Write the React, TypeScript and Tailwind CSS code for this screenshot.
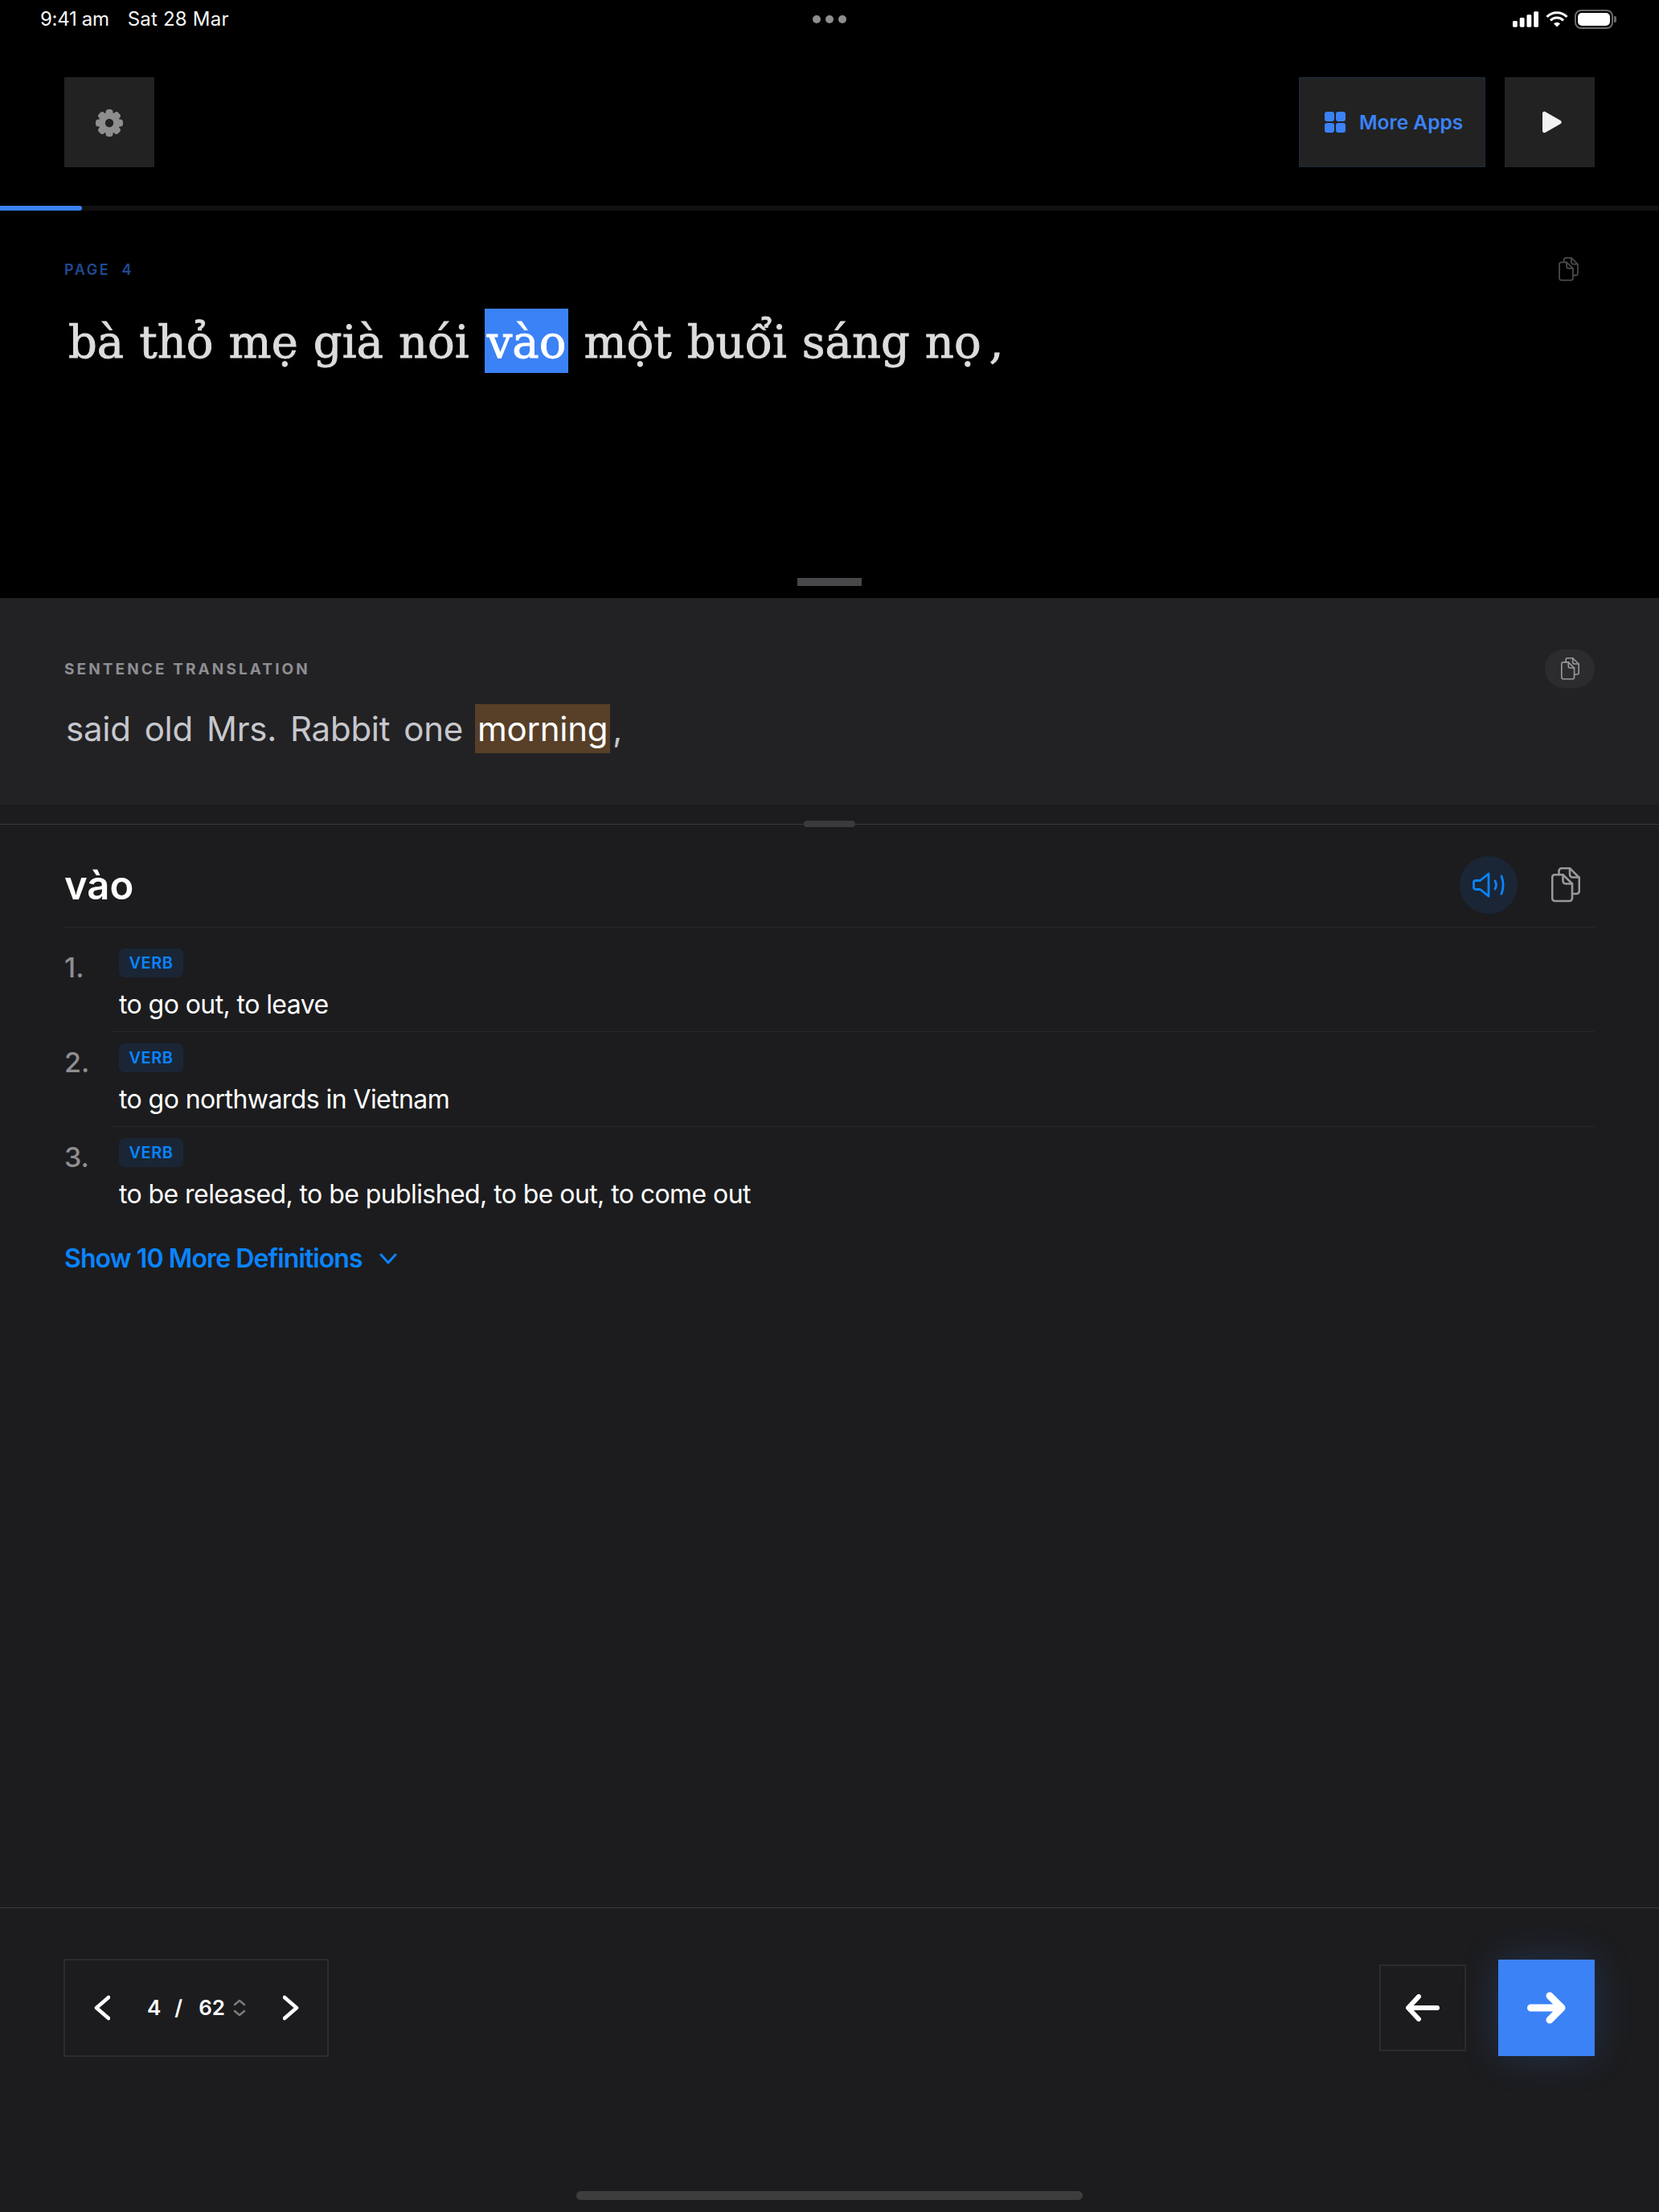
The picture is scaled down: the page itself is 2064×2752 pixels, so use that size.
import React from "react";

function CopyIcon({ className }: { className: string }) {
  return (
    <svg viewBox="0 0 36 44" fill="none" stroke="currentColor" strokeWidth="2.6" strokeLinejoin="round" strokeLinecap="round" className={className}>
      <path d="M4.5 9.2H14.5L26 20.5V38.5a3.5 3.5 0 0 1-3.5 3.5H4.7a3.5 3.5 0 0 1-3.5-3.5V12.7a3.5 3.5 0 0 1 3.3-3.5z" />
      <path d="M14.5 9.2V17a3.5 3.5 0 0 0 3.5 3.5H26" />
      <path d="M9.5 9V4.7a3.5 3.5 0 0 1 3.5-3.5H23L34.8 13V29.5a3.5 3.5 0 0 1-3.5 3.5H26" />
      <path d="M23 1.2V9a3.5 3.5 0 0 0 3.5 3.5H34.8" />
    </svg>
  );
}

function Gear() {
  return (
    <svg viewBox="0 0 34 34" fill="#8e8e8e" className="w-[34px] h-[34px] mt-[2px]">
      {[0, 45, 90, 135, 180, 225, 270, 315].map((a) => (
        <rect key={a} x="12.5" y="0" width="9" height="9" rx="3.5" transform={`rotate(${a} 17 17)`} />
      ))}
      <circle cx="17" cy="17" r="9.2" fill="none" stroke="#8e8e8e" strokeWidth="8" />
    </svg>
  );
}

function Chevron({ d, className }: { d: string; className: string }) {
  return (
    <svg viewBox="0 0 20 32" fill="none" stroke="currentColor" strokeWidth="4.6" strokeLinecap="round" strokeLinejoin="round" className={className}>
      <path d={d} />
    </svg>
  );
}

const viWords = ["bà", "thỏ", "mẹ", "già", "nói", "vào", "một", "buổi", "sáng", "nọ", ","];
const enWords = ["said", "old", "Mrs.", "Rabbit", "one", "morning", ","];
const defs = [
  "to go out, to leave",
  "to go northwards in Vietnam",
  "to be released, to be published, to be out, to come out",
];

export default function App() {
  return (
    <div className="relative w-[2064px] h-[2752px] flex flex-col bg-[#1c1c1e] text-white overflow-hidden font-['Inter',sans-serif]">
      <div className="bg-black">
        <div className="relative h-[48px] flex items-center pl-[50px] pr-[53px] text-[24px] leading-none text-[#f5f5f5]">
          <span className="tracking-[-0.3px]">9:41 am</span>
          <span className="ml-[23px] tracking-[0.2px]">Sat 28 Mar</span>
          <div className="absolute left-0 right-0 top-[19px] flex justify-center gap-[6px]">
            <span className="w-[10px] h-[10px] rounded-full bg-[#8e8e8e]" />
            <span className="w-[10px] h-[10px] rounded-full bg-[#8e8e8e]" />
            <span className="w-[10px] h-[10px] rounded-full bg-[#8e8e8e]" />
          </div>
          <svg viewBox="0 0 34 20" fill="white" className="ml-auto w-[33px] h-[20px] mr-[8px]">
            <rect x="0" y="12" width="6" height="8" rx="1.5" />
            <rect x="9" y="8" width="6" height="12" rx="1.5" />
            <rect x="18" y="4" width="6" height="16" rx="1.5" />
            <rect x="27" y="0" width="6" height="20" rx="1.5" />
          </svg>
          <svg viewBox="0 0 28 20" fill="none" stroke="white" strokeWidth="3" className="w-[28px] h-[20px] mr-[8px]">
            <path d="M1.5 7a17.5 17.5 0 0 1 25 0" />
            <path d="M6 11.5a11 11 0 0 1 16 0" />
            <path d="M14 19.5l-4-4a5.6 5.6 0 0 1 8 0z" fill="white" stroke="none" />
          </svg>
          <div className="w-[48px] h-[24px] rounded-[8px] border-2 border-[#6a6a6a] p-[2px]">
            <div className="w-full h-full rounded-[5px] bg-white" />
          </div>
          <div className="w-[3px] h-[8px] rounded-r-[2px] bg-[#6a6a6a] ml-[1px]" />
        </div>

        <div className="h-[208px] py-[48px] px-[80px] flex items-center">
          <div className="w-[112px] h-[112px] bg-[#222222] flex items-center justify-center">
            <Gear />
          </div>
          <div className="ml-auto w-[232px] h-[112px] bg-[#222222] border border-[#1c2a40] flex items-center pl-[31px] gap-[17px]">
            <svg viewBox="0 0 26 26" fill="#3b82f6" className="w-[26px] h-[26px]">
              <rect x="0" y="0" width="12" height="12" rx="3" />
              <rect x="14" y="0" width="12" height="12" rx="3" />
              <rect x="0" y="14" width="12" height="12" rx="3" />
              <rect x="14" y="14" width="12" height="12" rx="3" />
            </svg>
            <span className="text-[24.5px] font-semibold text-[#3b82f6] whitespace-nowrap">More Apps</span>
          </div>
          <div className="ml-[24px] w-[112px] h-[112px] bg-[#222222] flex items-center justify-center">
            <svg viewBox="0 0 26 28" fill="#f2f2f2" className="w-[26px] h-[28px] ml-[6px]">
              <path d="M1 3.2C1 1 3 .2 4.8 1.2L23.6 12c1.6 1 1.6 3 0 4L4.8 26.8C3 27.8 1 27 1 24.8z" />
            </svg>
          </div>
        </div>

        <div className="h-[6px] bg-[#111111]">
          <div className="w-[102px] h-full rounded-r-[3px] bg-[#3b82f6]" />
        </div>

        <div className="h-[482px] flex flex-col px-[80px] pt-[58px]">
          <div className="flex items-center justify-between h-[30px]">
            <span className="text-[18px] font-semibold tracking-[2.6px] text-[#1f4a95] whitespace-pre">PAGE  4</span>
            <CopyIcon className="w-[25px] h-[30px] mr-[20px] text-[#4a4a4a]" />
          </div>
          <div className="mt-[34px] h-[80px] flex items-start gap-[19px] pl-[5px] text-[56px] leading-[84px] text-[#dcdcdc] font-['DejaVu_Serif',serif] [-webkit-text-stroke-width:0.9px]">
            {viWords.map((w, i) => (
              <span key={i} className={w === "vào" ? "h-[80px] bg-[#3b82f6] text-white px-[3px]" : w === "," ? "h-[80px] -ml-[9px]" : "h-[80px]"}>{w}</span>
            ))}
          </div>
          <div className="mt-auto mb-[15px] self-center w-[80px] h-[10px] bg-[#48484a]" />
        </div>
      </div>

      <div className="h-[257px] bg-[#222224] px-[80px] pt-[64px]">
        <div className="flex items-center justify-between h-[48px]">
          <span className="mt-[2px] text-[19px] font-bold tracking-[3.1px] text-[#8e8e93]">SENTENCE TRANSLATION</span>
          <div className="w-[62px] h-[48px] rounded-full bg-[#2c2c2e] flex items-center justify-center">
            <CopyIcon className="w-[23px] h-[28px] text-[#98989d]" />
          </div>
        </div>
        <div className="mt-[20px] h-[61px] flex items-center gap-[17px] pl-[2px] text-[42px] leading-[61px] tracking-[-0.25px] text-[#c7c7cc]">
          {enWords.map((w, i) => (
            <span key={i} className={w === "morning" ? "bg-[#573f28] text-white px-[3px] -ml-[2px]" : w === "," ? "-ml-[14px]" : ""}>{w}</span>
          ))}
        </div>
      </div>

      <div className="h-[24px]" />
      <div className="relative h-[1px] bg-[#3a3a3c]">
        <div className="absolute left-[1000px] top-[-4px] w-[64px] h-[8px] rounded-[4px] bg-[#3a3a3c]" />
      </div>

      <div className="px-[80px] pt-[39px]">
        <div className="flex items-center h-[72px]">
          <span className="text-[49px] font-semibold leading-none">vào</span>
          <div className="ml-auto w-[72px] h-[72px] rounded-full bg-[#1a2636] flex items-center justify-center">
            <svg viewBox="0 0 40 32" fill="none" stroke="#0a84ff" strokeWidth="2.8" strokeLinecap="round" strokeLinejoin="round" className="w-[40px] h-[32px]">
              <path d="M20 2v28L9.5 21.5H4a2.5 2.5 0 0 1-2.5-2.5V13A2.5 2.5 0 0 1 4 10.500h5.500z" />
              <path d="M28 11c1.800 3 1.800 7 0 10" />
              <path d="M36 5c2.500 6.500 2.500 15.500 0 22" />
            </svg>
          </div>
          <CopyIcon className="ml-[42px] mr-[18px] w-[36px] h-[44px] text-[#98989d]" />
        </div>
        <div className="mt-[16px] h-[1px] bg-[#28282a]" />

        <div className="pt-[12px]">
          {defs.map((d, i) => (
            <div key={i} className="flex">
              <div className="w-[60px] pt-[18px] text-[34px] leading-[40px] font-medium text-[#8e8e93]">{i + 1}.</div>
              <div className={`flex-1 pl-[8px] pt-[14px] pb-[11px] ${i < 2 ? "border-b border-[#28282a]" : ""}`}>
                <div className="w-[80px] h-[36px] rounded-[7px] bg-[#1a2636] flex items-center justify-center text-[20px] font-semibold tracking-[0.5px] text-[#0a84ff]">VERB</div>
                <div className="mt-[12px] text-[32px] leading-[44px] tracking-[-0.58px] text-white">{d}</div>
              </div>
            </div>
          ))}
        </div>

        <div className="mt-[25px] h-[44px] flex items-center text-[#0a84ff]">
          <span className="text-[32px] font-semibold tracking-[-0.9px]">Show 10 More Definitions</span>
          <svg viewBox="0 0 22 14" fill="none" stroke="currentColor" strokeWidth="3" strokeLinecap="round" strokeLinejoin="round" className="ml-[21px] w-[22px] h-[14px]">
            <path d="M2 2l9 10 9-10" />
          </svg>
        </div>
      </div>

      <div className="flex-1" />

      <div className="h-[1px] bg-[#3a3a3c]" />
      <div className="h-[378px] flex flex-col px-[80px] pt-[63px]">
        <div className="flex items-center h-[122px]">
          <div className="-ml-[1px] w-[330px] h-[122px] border-2 border-[#2c2c2e] flex items-center pl-[36px] text-[26px] font-semibold leading-none text-white">
            <Chevron d="M18 3L3 16l15 13" className="w-[20px] h-[32px]" />
            <span className="ml-[46px]">4</span>
            <span className="ml-[17px]">/</span>
            <span className="ml-[20px]">62</span>
            <svg viewBox="0 0 16 22" fill="none" stroke="#7a7a7a" strokeWidth="2.600" strokeLinecap="round" strokeLinejoin="round" className="ml-[10px] w-[16px] h-[22px]">
              <path d="M2 7l6-5 6 5M2 15l6 5 6-5" />
            </svg>
            <Chevron d="M2 3l15 13L2 29" className="ml-[46px] w-[20px] h-[32px]" />
          </div>
          <div className="ml-auto w-[108px] h-[108px] border-2 border-[#2c2c2e] flex items-center justify-center">
            <svg viewBox="0 0 42 34" fill="none" stroke="white" strokeWidth="6" strokeLinecap="round" strokeLinejoin="round" className="w-[42px] h-[34px]">
              <path d="M39 17H3.500M16 3L3 17l13 14" />
            </svg>
          </div>
          <div className="ml-[40px] w-[120px] h-[120px] bg-[#3b82f6] shadow-[0_0_48px_rgba(59,130,246,0.22)] flex items-center justify-center">
            <svg viewBox="0 0 48 40" fill="none" stroke="white" strokeWidth="9" strokeLinecap="round" strokeLinejoin="round" className="w-[48px] h-[40px]">
              <path d="M4.500 20H43M28 5l15 15-15 15" />
            </svg>
          </div>
        </div>
        <div className="mt-auto mb-[15px] self-center w-[630px] h-[11px] rounded-[6px] bg-[#3d3d3d]" />
      </div>
    </div>
  );
}
